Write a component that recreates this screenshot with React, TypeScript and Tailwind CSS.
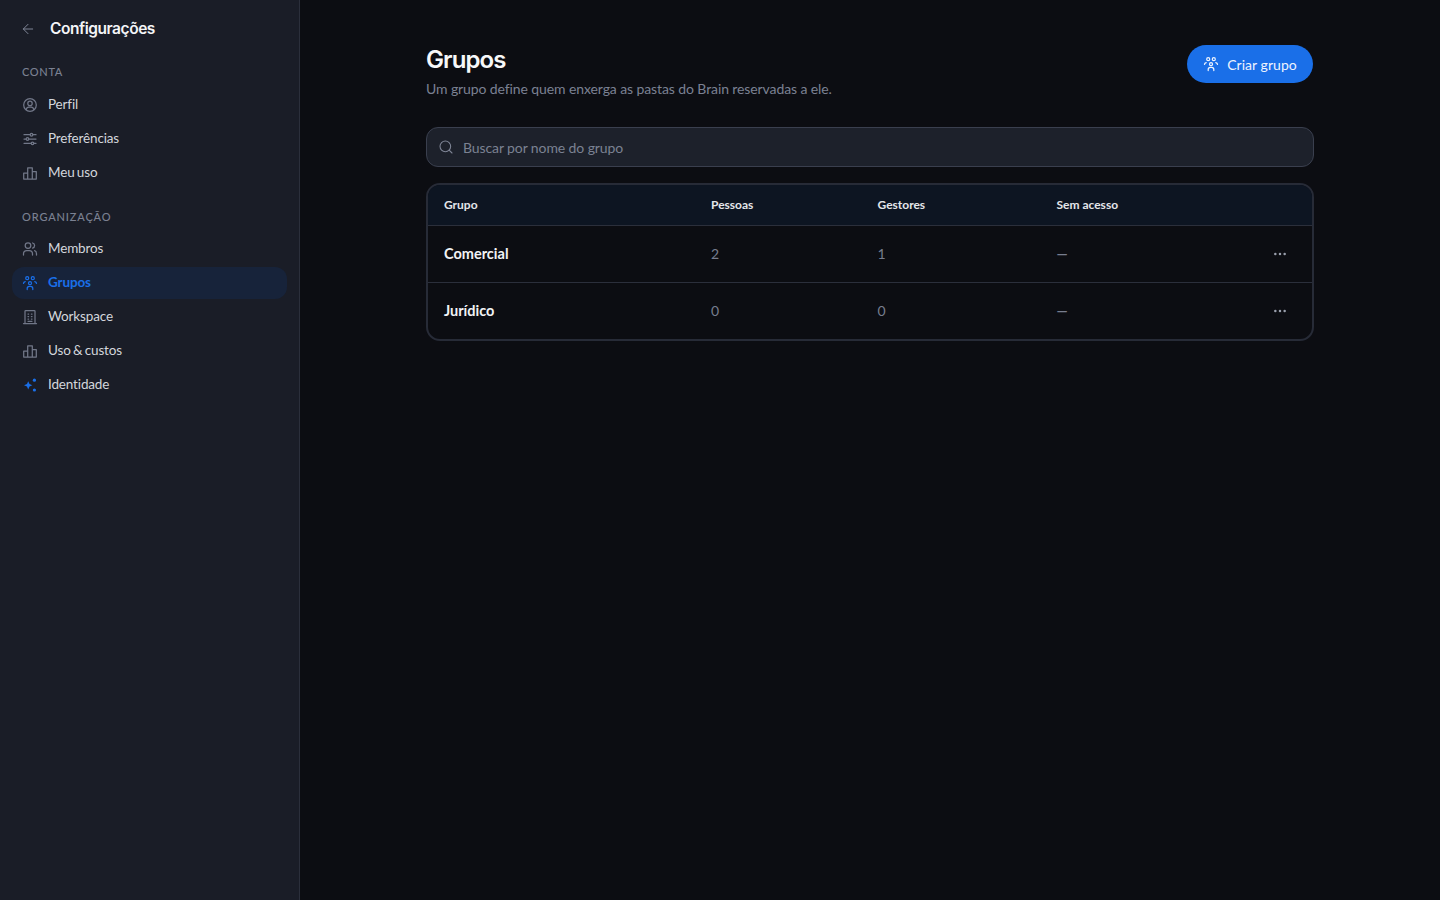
import { ArrowLeft, Search, MoreHorizontal } from "lucide-react";
import type { ReactNode } from "react";

const Icon = ({ children, className = "" }: { children: ReactNode; className?: string }) => (
  <svg
    viewBox="0 0 16 16"
    fill="none"
    stroke="currentColor"
    strokeWidth="1.25"
    strokeLinecap="round"
    strokeLinejoin="round"
    className={`w-[16px] h-[16px] shrink-0 ${className}`}
  >
    {children}
  </svg>
);

const ProfileIcon = () => (
  <Icon>
    <circle cx="8" cy="8" r="6.3" />
    <circle cx="8" cy="6.4" r="2.2" />
    <path d="M4.2 12.6c.3-1.7 1.3-2.6 2.6-2.6h2.4c1.3 0 2.3.9 2.6 2.6" />
  </Icon>
);

const SlidersIcon = () => (
  <Icon>
    <path d="M2 3.7h6.2M10.8 3.7H14M2 8h2.2M6.8 8H14M2 12.3h7.2M11.8 12.3H14" />
    <circle cx="9.5" cy="3.7" r="1.3" />
    <circle cx="5.5" cy="8" r="1.3" />
    <circle cx="10.5" cy="12.3" r="1.3" />
  </Icon>
);

const BarsIcon = () => (
  <Icon>
    <path d="M1.7 14V8h4v6M5.7 14V2.8h4.6V14M10.3 6.5h4V14H1.7" />
  </Icon>
);

const MembersIcon = () => (
  <Icon>
    <circle cx="6" cy="4.6" r="2.8" />
    <path d="M1.5 14v-1.2c0-2 1.4-3.3 3.3-3.3h2.4c1.9 0 3.3 1.3 3.3 3.3V14" />
    <path d="M10.6 2c1.2.3 2 1.4 2 2.6s-.8 2.3-2 2.6M12.6 9.7c1.2.4 1.9 1.5 1.9 3V14" />
  </Icon>
);

const GroupsIcon = () => (
  <Icon>
    <circle cx="5.2" cy="3.2" r="1.5" />
    <circle cx="10.8" cy="3.2" r="1.5" />
    <circle cx="8" cy="8.2" r="1.5" />
    <path d="M1.5 8.4c.1-1 .7-1.6 1.7-1.8M14.5 8.4c-.1-1-.7-1.6-1.7-1.8M5.2 14.5v-1c0-1.3.9-2.2 2.1-2.2h1.4c1.2 0 2.1.9 2.1 2.2v1" />
  </Icon>
);

const BuildingIcon = () => (
  <Icon>
    <path d="M1.5 14.5h13M3 14.5V2.2c0-.4.3-.7.7-.7h8.6c.4 0 .7.3.7.7v12.3" />
    <path d="M6 5h.6M9.4 5h.6M6 7.5h.6M9.4 7.5h.6M6 10h.6M9.4 10h.6M6 12.3h4" />
  </Icon>
);

const SparkIcon = () => (
  <svg viewBox="0 0 16 16" fill="currentColor" className="w-[16px] h-[16px] shrink-0">
    <path d="M6.2 4.2 7.5 7l2.8 1.3-2.8 1.2-1.3 2.9L5 9.5 2 8.3 5 7Z" />
    <circle cx="12.4" cy="3.2" r="1.6" />
    <circle cx="12.4" cy="13" r="1.6" />
  </svg>
);

const contaItems = [
  { label: "Perfil", icon: <ProfileIcon /> },
  { label: "Preferências", icon: <SlidersIcon /> },
  { label: "Meu uso", icon: <BarsIcon /> },
];

const orgItems = [
  { label: "Membros", icon: <MembersIcon /> },
  { label: "Grupos", icon: <GroupsIcon />, active: true },
  { label: "Workspace", icon: <BuildingIcon /> },
  { label: "Uso & custos", icon: <BarsIcon /> },
  { label: "Identidade", icon: <SparkIcon />, accent: true },
];

type Item = { label: string; icon: ReactNode; active?: boolean; accent?: boolean };

const NavRow = ({ item }: { item: Item }) => (
  <div
    className={`h-[32px] mb-[2px] pl-[10px] rounded-[12px] flex items-center gap-[10px] text-[13.5px] tracking-[-0.15px] [word-spacing:-1px] ${
      item.active ? "bg-[#17233a] text-[#1a6fe8]" : "text-[#d3d6dc]"
    }`}
  >
    <span className={item.active || item.accent ? "text-[#1a6fe8]" : "text-[#717788]"}>{item.icon}</span>
    <span className={`pb-[1px] ${item.active ? "font-bold" : ""}`}>{item.label}</span>
  </div>
);

const rows = [
  { name: "Comercial", people: "2", managers: "1" },
  { name: "Jurídico", people: "0", managers: "0" },
];

export default function App() {
  return (
    <div className="flex h-[900px] bg-[#0c0d12] font-['Lato',sans-serif] overflow-hidden">
      {/* Sidebar */}
      <aside className="w-[300px] shrink-0 bg-[#1a1d27] border-r border-[#2b2f3b] px-[12px]">
        <div className="h-[57px] pl-[8px] flex items-center gap-[14px]">
          <ArrowLeft className="w-[16px] h-[16px] text-[#7f8596]" strokeWidth={1.5} />
          <span className="font-['Inter',sans-serif] text-[15.5px] font-semibold tracking-[-0.45px] text-[#f4f5f7]">
            Configurações
          </span>
        </div>
        <div className="pl-[10px] h-[30px] mb-[2px] flex items-center text-[11px] font-medium tracking-[0.65px] text-[#7b8192]">
          CONTA
        </div>
        {contaItems.map((item) => (
          <NavRow key={item.label} item={item} />
        ))}
        <div className="pl-[10px] mt-[14px] h-[30px] pb-[2px] flex items-center text-[11px] font-medium tracking-[0.85px] text-[#7b8192]">
          ORGANIZAÇÃO
        </div>
        {orgItems.map((item) => (
          <NavRow key={item.label} item={item} />
        ))}
      </aside>

      {/* Main */}
      <main className="flex-1 pl-[126px] pr-[126px] pt-[45px]">
        <div className="flex justify-between items-start">
          <div>
            <h1 className="font-['Inter',sans-serif] text-[24px] leading-[30px] font-semibold tracking-[-0.9px] text-[#f7f8f9]">
              Grupos
            </h1>
            <p className="mt-[4px] text-[14px] leading-[20px] tracking-[-0.1px] text-[#7b8192]">
              Um grupo define quem enxerga as pastas do Brain reservadas a ele.
            </p>
          </div>
          <button className="h-[38px] w-[126px] mr-[1px] rounded-full bg-[#1a6fe8] text-[#eef4fe] text-[14px] tracking-[0.05px] flex items-center justify-center gap-[8px]">
            <GroupsIcon />
            Criar grupo
          </button>
        </div>

        <div className="mt-[28px] h-[40px] rounded-[12px] border border-[#3a3f4e] bg-[#1d212b] flex items-center pl-[11px] gap-[9px]">
          <Search className="w-[16px] h-[16px] text-[#7f8596]" strokeWidth={1.6} />
          <input
            placeholder="Buscar por nome do grupo"
            className="flex-1 bg-transparent outline-none text-[14px] tracking-[-0.1px] placeholder:text-[#7b8192]"
          />
        </div>

        <div className="mt-[16px] rounded-[14px] border-2 border-[#272b37] overflow-hidden">
          <table className="w-full table-fixed border-collapse">
            <colgroup>
              <col className="w-[267px]" />
              <col className="w-[166.5px]" />
              <col className="w-[179px]" />
              <col />
              <col className="w-[66px]" />
            </colgroup>
            <thead>
              <tr className="h-[40px] bg-[#0d1522] text-left text-[12px] text-[#e4e6ea]">
                <th className="pl-[16px] font-bold">Grupo</th>
                <th className="pl-[16px] font-bold">Pessoas</th>
                <th className="pl-[16px] font-bold">Gestores</th>
                <th className="pl-[16px] font-bold">Sem acesso</th>
                <th />
              </tr>
            </thead>
            <tbody>
              {rows.map((row) => (
                <tr key={row.name} className="h-[57px] border-t border-[#2b2f3b] text-[14px] text-[#777d8e]">
                  <td className="pl-[16px] font-bold text-[14.5px] text-[#f2f3f5]">{row.name}</td>
                  <td className="pl-[16px]">{row.people}</td>
                  <td className="pl-[16px]">{row.managers}</td>
                  <td className="pl-[16px] font-bold">—</td>
                  <td>
                    <MoreHorizontal className="ml-[26px] w-[16px] h-[16px] text-[#9a9fac]" strokeWidth={1.8} />
                  </td>
                </tr>
              ))}
            </tbody>
          </table>
        </div>
      </main>
    </div>
  );
}
